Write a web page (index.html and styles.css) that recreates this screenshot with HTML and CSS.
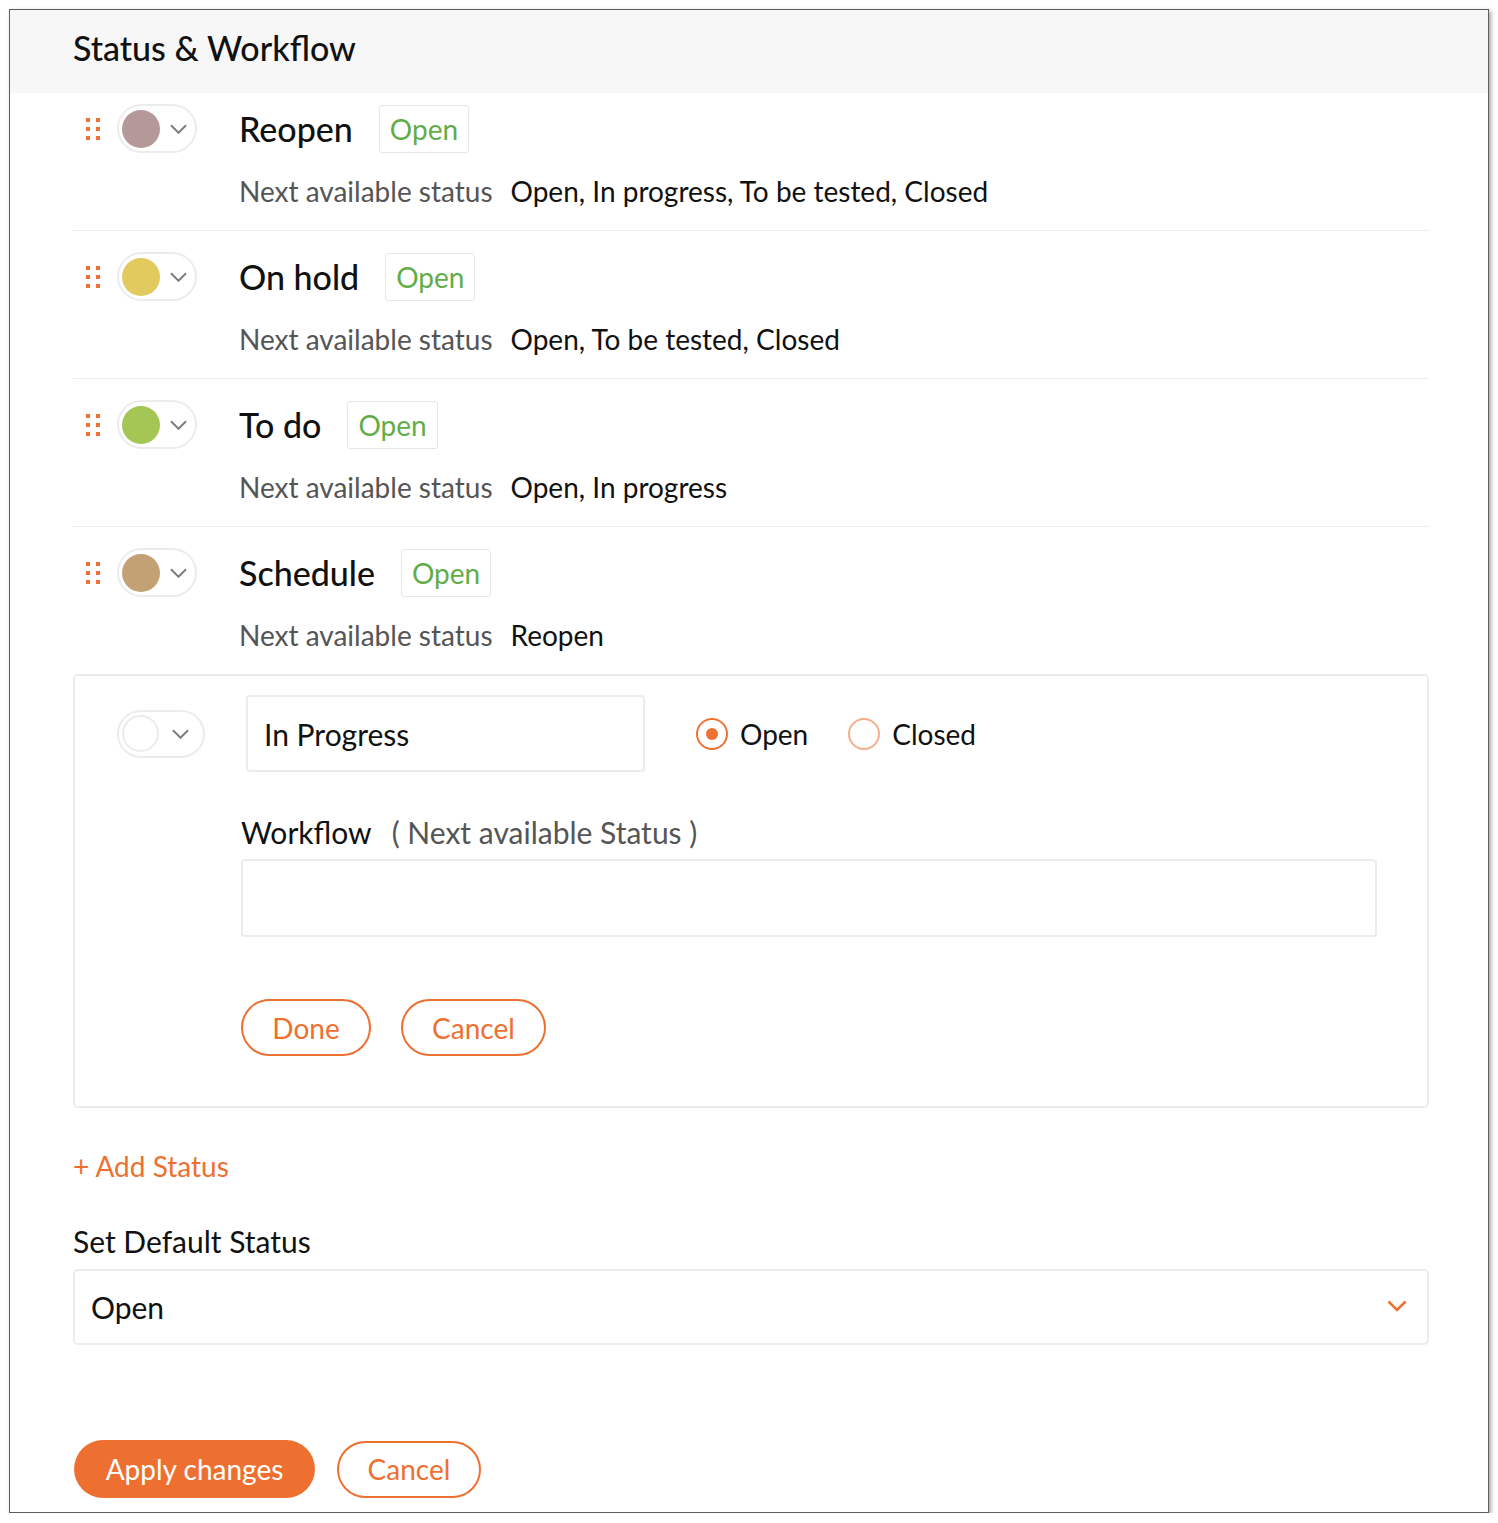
FILE: index.html
```html
<!DOCTYPE html>
<html>
<head>
<meta charset="utf-8">
<link rel="stylesheet" href="styles.css">
</head>
<body>
<div class="frame">
  <div class="header"><h1 class="title">Status &amp; Workflow</h1></div>
  <div class="content">
    <div class="status-list">
      <div class="status-row">
        <div class="row-top">
          <span class="handle"><i></i><i></i><i></i><i></i><i></i><i></i></span>
          <span class="color-pill"><span class="swatch" style="background:#b59898"></span><svg class="chev" viewBox="0 0 18 10"><path d="M1 1l8 8 8-8"/></svg></span>
          <span class="status-name">Reopen</span>
          <span class="badge">Open</span>
        </div>
        <div class="row-next"><span class="next-label">Next available status</span><span class="next-value">Open, In progress, To be tested, Closed</span></div>
      </div>
      <div class="status-row">
        <div class="row-top">
          <span class="handle"><i></i><i></i><i></i><i></i><i></i><i></i></span>
          <span class="color-pill"><span class="swatch" style="background:#e2ca5e"></span><svg class="chev" viewBox="0 0 18 10"><path d="M1 1l8 8 8-8"/></svg></span>
          <span class="status-name">On hold</span>
          <span class="badge">Open</span>
        </div>
        <div class="row-next"><span class="next-label">Next available status</span><span class="next-value">Open, To be tested, Closed</span></div>
      </div>
      <div class="status-row">
        <div class="row-top">
          <span class="handle"><i></i><i></i><i></i><i></i><i></i><i></i></span>
          <span class="color-pill"><span class="swatch" style="background:#a4c655"></span><svg class="chev" viewBox="0 0 18 10"><path d="M1 1l8 8 8-8"/></svg></span>
          <span class="status-name">To do</span>
          <span class="badge">Open</span>
        </div>
        <div class="row-next"><span class="next-label">Next available status</span><span class="next-value">Open, In progress</span></div>
      </div>
      <div class="status-row">
        <div class="row-top">
          <span class="handle"><i></i><i></i><i></i><i></i><i></i><i></i></span>
          <span class="color-pill"><span class="swatch" style="background:#c3a174"></span><svg class="chev" viewBox="0 0 18 10"><path d="M1 1l8 8 8-8"/></svg></span>
          <span class="status-name">Schedule</span>
          <span class="badge">Open</span>
        </div>
        <div class="row-next"><span class="next-label">Next available status</span><span class="next-value">Reopen</span></div>
      </div>
    </div>

    <div class="edit-box">
      <div class="edit-top">
        <span class="color-pill wide"><span class="swatch empty"></span><svg class="chev" viewBox="0 0 18 10"><path d="M1 1l8 8 8-8"/></svg></span>
        <div class="text-input">In Progress</div>
        <label class="radio"><span class="radio-circle checked"></span>Open</label>
        <label class="radio"><span class="radio-circle"></span>Closed</label>
      </div>
      <div class="edit-body">
        <div class="workflow-label">Workflow <span class="muted">( Next available Status )</span></div>
        <div class="text-area"></div>
        <div class="btn-row">
          <button class="btn outline done">Done</button>
          <button class="btn outline cancel-sm">Cancel</button>
        </div>
      </div>
    </div>

    <div class="add-status">+ Add Status</div>
    <div class="field-label">Set Default Status</div>
    <div class="select">
      <span>Open</span>
      <svg class="select-chev" viewBox="0 0 20 12"><path d="M1.5 1.5l8.5 8.5 8.5-8.5"/></svg>
    </div>

    <div class="footer">
      <button class="btn filled">Apply changes</button>
      <button class="btn outline cancel">Cancel</button>
    </div>
  </div>
</div>
</body>
</html>
```

FILE: styles.css
```css
* { box-sizing: border-box; }
html, body { margin: 0; padding: 0; background: #fff; }
body {
  font-family: Lato, "Open Sans", sans-serif;
  color: #111;
}
.frame {
  margin: 9px 0 0 9px;
  width: 1480px;
  height: 1504px;
  border: 1px solid #5e5e5e;
  box-shadow: 2px 2px 4px rgba(0,0,0,0.35);
  background: #fff;
}
.header {
  height: 83px;
  background: #f7f7f7;
  padding-left: 63px;
  display: flex;
  align-items: center;
}
.title {
  margin: 0;
  font-size: 34px;
  font-weight: 500;
  color: #111;
  padding-bottom: 8px;
}
.content {
  padding: 0 59px 0 63px;
}
.status-row {
  padding: 21px 0 22px;
  border-bottom: 1px solid #ececec;
}
.status-row:first-child { padding-top: 11px; }
.status-row:last-child { border-bottom: none; }
.row-top {
  display: flex;
  align-items: center;
  height: 49px;
}
.handle {
  display: grid;
  grid-template-columns: 4px 4px;
  grid-template-rows: 4px 4px 4px;
  column-gap: 6px;
  row-gap: 5px;
  margin-left: 13px;
  width: 14px;
}
.handle i {
  display: block;
  width: 4px;
  height: 4px;
  background: #f07232;
}
.color-pill {
  display: flex;
  align-items: center;
  width: 80px;
  height: 49px;
  border: 2px solid #ececec;
  border-radius: 25px;
  padding-left: 3px;
  margin-left: 17px;
}
.color-pill.wide {
  width: 88px;
  height: 48px;
  margin-left: 42px;
}
.swatch {
  width: 38px;
  height: 38px;
  border-radius: 50%;
  flex: none;
}
.swatch.empty {
  border: 2px solid #ececec;
  background: #fff;
  width: 37px;
  height: 37px;
}
.chev {
  width: 17px;
  height: 10px;
  margin-left: 10px;
  fill: none;
  stroke: #7b7b7b;
  stroke-width: 2;
}
.wide .chev { margin-left: 13px; }
.status-name {
  font-size: 34px;
  font-weight: 500;
  margin-left: 42px;
  color: #111;
}
.badge {
  margin-left: 26px;
  height: 48px;
  padding: 0 10px;
  border: 1px solid #e6e6e6;
  border-radius: 3px;
  color: #62ad48;
  font-size: 28px;
  display: flex;
  align-items: center;
}
.row-next {
  margin-top: 21px;
  padding-left: 166px;
  font-size: 28px;
  line-height: 34px;
}
.next-label { color: #555; margin-right: 18px; }
.next-value { color: #111; }

.edit-box {
  border: 2px solid #ececec;
  border-radius: 5px;
  padding: 19px 50px 50px 0;
}
.edit-top {
  display: flex;
  align-items: center;
}
.text-input {
  margin-left: 41px;
  width: 399px;
  height: 77px;
  border: 2px solid #ececec;
  border-radius: 4px;
  font-size: 30px;
  padding-left: 16px;
  display: flex;
  align-items: center;
}
.radio {
  display: flex;
  align-items: center;
  font-size: 28px;
  color: #111;
}
.text-input + .radio { margin-left: 51px; }
.radio + .radio { margin-left: 40px; }
.radio-circle {
  width: 32px;
  height: 32px;
  border-radius: 50%;
  border: 2px solid #f5ad8a;
  margin-right: 12px;
  display: flex;
  align-items: center;
  justify-content: center;
}
.radio-circle.checked { border-color: #ef7233; }
.radio-circle.checked::after {
  content: "";
  width: 12px;
  height: 12px;
  border-radius: 50%;
  background: #ef7233;
}
.edit-body {
  padding-left: 166px;
}
.workflow-label {
  margin-top: 40px;
  font-size: 30px;
  line-height: 40px;
  color: #111;
}
.muted { color: #555; margin-left: 13px; }
.text-area {
  margin-top: 7px;
  height: 78px;
  border: 2px solid #ececec;
  border-radius: 4px;
}
.btn-row {
  display: flex;
  gap: 30px;
  margin-top: 62px;
}
.btn {
  font-family: Lato, "Open Sans", sans-serif;
  font-size: 28px;
  border-radius: 30px;
  border: 2px solid #ee7031;
  background: #fff;
  color: #ee7031;
  padding: 0;
  cursor: pointer;
}
.btn.done { width: 130px; height: 57px; }
.btn.cancel-sm { width: 145px; height: 57px; }
.add-status {
  margin-top: 38px;
  font-size: 28px;
  line-height: 40px;
  color: #ee7031;
}
.field-label {
  margin-top: 35px;
  font-size: 30px;
  line-height: 40px;
  color: #111;
}
.select {
  margin-top: 8px;
  height: 76px;
  border: 2px solid #ececec;
  border-radius: 5px;
  display: flex;
  align-items: center;
  justify-content: space-between;
  padding: 0 20px 0 16px;
  font-size: 30px;
}
.select-chev {
  width: 20px;
  height: 12px;
  fill: none;
  stroke: #ee7031;
  stroke-width: 2.5;
  margin-bottom: 3px;
}
.footer {
  margin-top: 95px;
  display: flex;
  align-items: center;
  gap: 22px;
  padding-left: 1px;
}
.btn.filled {
  background: #ee7031;
  color: #fff;
  width: 241px;
  height: 58px;
  border: none;
}
.btn.cancel { width: 144px; height: 57px; }
```
